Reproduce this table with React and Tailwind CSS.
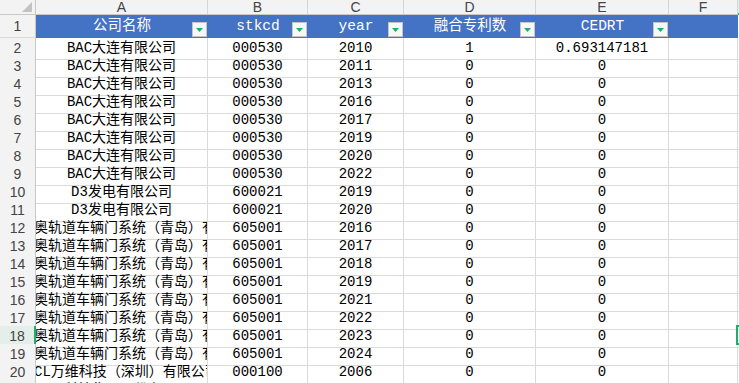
const cols = ["A", "B", "C", "D", "E", "F"];

const heads = ["公司名称", "stkcd", "year", "融合专利数", "CEDRT"];

const AO = "奥轨道车辆门系统（青岛）有";

const rows = [
  ["BAC大连有限公司", "000530", "2010", "1", "0.693147181"],
  ["BAC大连有限公司", "000530", "2011", "0", "0"],
  ["BAC大连有限公司", "000530", "2013", "0", "0"],
  ["BAC大连有限公司", "000530", "2016", "0", "0"],
  ["BAC大连有限公司", "000530", "2017", "0", "0"],
  ["BAC大连有限公司", "000530", "2019", "0", "0"],
  ["BAC大连有限公司", "000530", "2020", "0", "0"],
  ["BAC大连有限公司", "000530", "2022", "0", "0"],
  ["D3发电有限公司", "600021", "2019", "0", "0"],
  ["D3发电有限公司", "600021", "2020", "0", "0"],
  [AO, "605001", "2016", "0", "0", true],
  [AO, "605001", "2017", "0", "0", true],
  [AO, "605001", "2018", "0", "0", true],
  [AO, "605001", "2019", "0", "0", true],
  [AO, "605001", "2021", "0", "0", true],
  [AO, "605001", "2022", "0", "0", true],
  [AO, "605001", "2023", "0", "0", true],
  [AO, "605001", "2024", "0", "0", true],
  ["CL万维科技（深圳）有限公司", "000100", "2006", "0", "0", true],
  ["TCL科技集团股份有限公司", "000100", "2007", "0", "0", false],
];

const grid =
  "grid grid-cols-[36px_172px_100px_96px_132px_133px_69px_1fr]";
const mono = "font-['Liberation_Mono','Noto_Sans_CJK_SC',monospace]";
const sans = "font-['Liberation_Sans','Noto_Sans_CJK_SC',sans-serif]";

function FilterButton() {
  return (
    <div className="absolute right-[1px] bottom-[1px] w-[15px] h-[15px] bg-[#f7f7f7] border border-[#c4c4c4] flex items-center justify-center">
      <svg width="7" height="4" viewBox="0 0 7 4">
        <path d="M0 0 H7 L3.5 4 Z" fill="#1fae6a" />
      </svg>
    </div>
  );
}

export default function App() {
  return (
    <div className="relative w-[739px] h-[383px] overflow-hidden bg-white">
      {/* column letters */}
      <div className={`${grid} h-[15px] bg-[#f3f3f3]`}>
        <div className="relative border-r border-b border-[#c8c8c8]">
          <svg
            className="absolute right-[3px] bottom-[2px]"
            width="10"
            height="10"
            viewBox="0 0 10 10"
          >
            <path d="M10 0 V10 H0 Z" fill="#c2c2c2" />
          </svg>
        </div>
        {cols.map((c) => (
          <div
            key={c}
            className={`${sans} flex items-center justify-center text-[14px] leading-none text-[#444] border-r border-b border-[#d6d6d6] border-b-[#c8c8c8]`}
          >
            {c}
          </div>
        ))}
        <div className="bg-[#e4efe9] border-b-2 border-[#1fae6a]" />
      </div>

      {/* header row */}
      <div className={`${grid} h-[23px]`}>
        <div
          className={`${sans} flex items-center justify-center text-[14px] text-[#444] bg-[#f3f3f3] border-r border-b border-[#c8c8c8] border-b-[#dadada]`}
        >
          1
        </div>
        {heads.map((h) => (
          <div
            key={h}
            className={`${mono} relative flex items-center justify-center bg-[#4472c4] text-white text-[14.5px] whitespace-nowrap`}
          >
            {h}
            <FilterButton />
          </div>
        ))}
        <div className="bg-[#4472c4]" />
        <div className="bg-white" />
      </div>

      {/* data rows */}
      {rows.map((r, i) => {
        const n = i + 2;
        const sel = n === 18;
        return (
          <div key={n} className={`${grid} h-[18px]`}>
            <div
              className={`${sans} flex items-center justify-center text-[14px] text-[#444] border-b border-[#dadada] ${
                sel
                  ? "bg-[#e4efe9] border-r-2 border-r-[#1fae6a]"
                  : "bg-[#f3f3f3] border-r border-r-[#c8c8c8]"
              }`}
            >
              {n}
            </div>
            <div
              className={`${mono} flex items-center overflow-hidden whitespace-nowrap text-[14px] text-black border-r border-b border-[#dadada] ${
                r[5] ? "justify-start" : "justify-center"
              }`}
            >
              <span className={r[5] ? "ml-[-2px]" : ""}>{r[0]}</span>
            </div>
            {r.slice(1, 5).map((v, j) => (
              <div
                key={j}
                className={`${mono} flex items-center justify-center whitespace-nowrap text-[14px] text-black border-r border-b border-[#dadada]`}
              >
                {v}
              </div>
            ))}
            <div className="border-r border-b border-[#dadada]" />
            <div className="border-b border-[#dadada]" />
          </div>
        );
      })}

      {/* selected cell G18 */}
      <div className="absolute left-[736px] top-[325px] w-[12px] h-[20px] border-2 border-[#1fae6a]" />
    </div>
  );
}
